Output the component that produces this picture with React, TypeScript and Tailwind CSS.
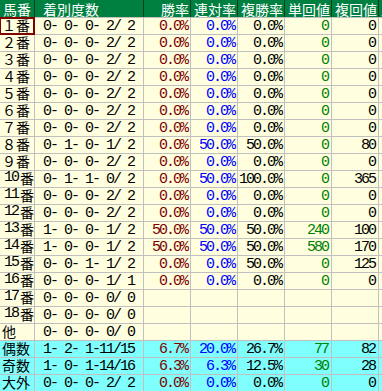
type Row = {
  label: string;
  record: string;
  win: string;
  place: string;
  show: string;
  winReturn: string;
  showReturn: string;
  summary?: boolean;
};

const rows: Row[] = [
  { label: "１番", record: "0- 0- 0- 2/ 2", win: "0.0%", place: "0.0%", show: "0.0%", winReturn: "0", showReturn: "0" },
  { label: "２番", record: "0- 0- 0- 2/ 2", win: "0.0%", place: "0.0%", show: "0.0%", winReturn: "0", showReturn: "0" },
  { label: "３番", record: "0- 0- 0- 2/ 2", win: "0.0%", place: "0.0%", show: "0.0%", winReturn: "0", showReturn: "0" },
  { label: "４番", record: "0- 0- 0- 2/ 2", win: "0.0%", place: "0.0%", show: "0.0%", winReturn: "0", showReturn: "0" },
  { label: "５番", record: "0- 0- 0- 2/ 2", win: "0.0%", place: "0.0%", show: "0.0%", winReturn: "0", showReturn: "0" },
  { label: "６番", record: "0- 0- 0- 2/ 2", win: "0.0%", place: "0.0%", show: "0.0%", winReturn: "0", showReturn: "0" },
  { label: "７番", record: "0- 0- 0- 2/ 2", win: "0.0%", place: "0.0%", show: "0.0%", winReturn: "0", showReturn: "0" },
  { label: "８番", record: "0- 1- 0- 1/ 2", win: "0.0%", place: "50.0%", show: "50.0%", winReturn: "0", showReturn: "80" },
  { label: "９番", record: "0- 0- 0- 2/ 2", win: "0.0%", place: "0.0%", show: "0.0%", winReturn: "0", showReturn: "0" },
  { label: "10番", record: "0- 1- 1- 0/ 2", win: "0.0%", place: "50.0%", show: "100.0%", winReturn: "0", showReturn: "365" },
  { label: "11番", record: "0- 0- 0- 2/ 2", win: "0.0%", place: "0.0%", show: "0.0%", winReturn: "0", showReturn: "0" },
  { label: "12番", record: "0- 0- 0- 2/ 2", win: "0.0%", place: "0.0%", show: "0.0%", winReturn: "0", showReturn: "0" },
  { label: "13番", record: "1- 0- 0- 1/ 2", win: "50.0%", place: "50.0%", show: "50.0%", winReturn: "240", showReturn: "100" },
  { label: "14番", record: "1- 0- 0- 1/ 2", win: "50.0%", place: "50.0%", show: "50.0%", winReturn: "580", showReturn: "170" },
  { label: "15番", record: "0- 0- 1- 1/ 2", win: "0.0%", place: "0.0%", show: "50.0%", winReturn: "0", showReturn: "125" },
  { label: "16番", record: "0- 0- 0- 1/ 1", win: "0.0%", place: "0.0%", show: "0.0%", winReturn: "0", showReturn: "0" },
  { label: "17番", record: "0- 0- 0- 0/ 0", win: "", place: "", show: "", winReturn: "", showReturn: "" },
  { label: "18番", record: "0- 0- 0- 0/ 0", win: "", place: "", show: "", winReturn: "", showReturn: "" },
  { label: "他", record: "0- 0- 0- 0/ 0", win: "", place: "", show: "", winReturn: "", showReturn: "" },
  { label: "偶数", record: "1- 2- 1-11/15", win: "6.7%", place: "20.0%", show: "26.7%", winReturn: "77", showReturn: "82", summary: true },
  { label: "奇数", record: "1- 0- 1-14/16", win: "6.3%", place: "6.3%", show: "12.5%", winReturn: "30", showReturn: "28", summary: true },
  { label: "大外", record: "0- 0- 0- 2/ 2", win: "0.0%", place: "0.0%", show: "0.0%", winReturn: "0", showReturn: "0", summary: true },
];

const gridCols = "grid grid-cols-[34px_108px_46px_46px_46px_46px_46px_46px] gap-px";
const jpFont = "font-['Noto_Sans_CJK_JP',sans-serif] text-[14px]";
const monoFont = "font-['Liberation_Mono','Noto_Sans_CJK_JP',monospace] text-[15px] tracking-[-2px]";

function HeaderCell({ text, align = "right" }: { text: string; align?: "left" | "right" }) {
  return (
    <div
      className={`flex h-[17px] items-center overflow-hidden whitespace-nowrap bg-[#008040] leading-4 text-white ${jpFont} ${
        align === "left" ? "justify-start pl-[3px]" : "justify-end pr-[1px]"
      }`}
    >
      {text}
    </div>
  );
}

function NumCell({ text, color, bg }: { text: string; color: string; bg: string }) {
  return (
    <div
      className={`flex h-4 items-start justify-end overflow-hidden whitespace-nowrap pr-[3px] pt-[2px] leading-[14px] ${bg} ${color} ${monoFont}`}
    >
      {text}
    </div>
  );
}

export default function App() {
  return (
    <div className="h-[391px] w-[382px] overflow-hidden bg-white">
      <div className="flex w-[425px] flex-col gap-px bg-[#c0c0c0]">
        <div className={`${gridCols} bg-[#0a3d22]`}>
          <HeaderCell text="馬番" align="left" />
          <div className={`flex h-[17px] items-center bg-[#008040] pl-2 leading-4 text-white ${jpFont}`}>着別度数</div>
          <HeaderCell text="勝率" />
          <HeaderCell text="連対率" />
          <HeaderCell text="複勝率" />
          <HeaderCell text="単回値" />
          <HeaderCell text="複回値" />
          <div className={`flex h-[17px] items-center overflow-hidden whitespace-nowrap bg-[#008040] pl-[2px] leading-4 text-white ${jpFont}`}>
            上がり
          </div>
        </div>

        {rows.map((row, index) => {
          const bg = row.summary ? "bg-[#80ffff]" : "bg-[#ffffe0]";
          const twoDigit = row.label.startsWith("1") && row.label.length === 3;
          return (
            <div key={row.label} className={gridCols}>
              <div className={`relative flex h-4 items-start whitespace-nowrap pl-[2px] leading-[14px] text-black ${bg} ${jpFont}`}>
                {twoDigit ? (
                  <>
                    <span className={`${monoFont} pl-[2px]`}>{row.label.slice(0, 2)}</span>
                    <span className="pl-[2px]">{row.label.slice(2)}</span>
                  </>
                ) : (
                  row.label
                )}
                {index === 0 && (
                  <span className="absolute -bottom-px -left-px -right-px -top-px border-2 border-[#800000]" />
                )}
              </div>
              <div className={`flex h-4 items-start whitespace-pre pl-2 pt-[2px] leading-[14px] text-black ${bg} ${monoFont}`}>
                {row.record}
              </div>
              <NumCell text={row.win} color="text-[#800000]" bg={bg} />
              <NumCell text={row.place} color="text-[#0000ff]" bg={bg} />
              <NumCell text={row.show} color="text-black" bg={bg} />
              <NumCell text={row.winReturn} color="text-[#008000]" bg={bg} />
              <NumCell text={row.showReturn} color="text-black" bg={bg} />
              <div className={`h-4 ${bg}`} />
            </div>
          );
        })}
      </div>
    </div>
  );
}
